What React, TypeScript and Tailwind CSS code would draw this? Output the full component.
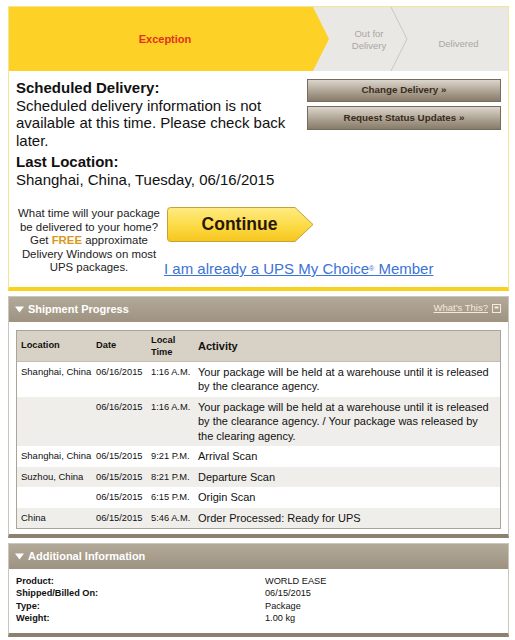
import React from "react";

const rows = [
  { loc: "Shanghai, China", date: "06/16/2015", time: "1:16 A.M.", act: "Your package will be held at a warehouse until it is released by the clearance agency." },
  { loc: "", date: "06/16/2015", time: "1:16 A.M.", act: "Your package will be held at a warehouse until it is released by the clearance agency. / Your package was released by the clearing agency." },
  { loc: "Shanghai, China", date: "06/15/2015", time: "9:21 P.M.", act: "Arrival Scan" },
  { loc: "Suzhou, China", date: "06/15/2015", time: "8:21 P.M.", act: "Departure Scan" },
  { loc: "", date: "06/15/2015", time: "6:15 P.M.", act: "Origin Scan" },
  { loc: "China", date: "06/15/2015", time: "5:46 A.M.", act: "Order Processed: Ready for UPS" },
];

function Tri() {
  return (
    <svg width="9" height="7" viewBox="0 0 9 7" className="shrink-0">
      <polygon points="0,0.5 9,0.5 4.5,6.5" fill="#ffffff" />
    </svg>
  );
}

export default function App() {
  return (
    <div className="w-[515px] h-[640px] bg-white pt-[6px] pl-[8px] pr-[6px] text-[#111] [font-family:'Liberation_Sans',Arial,sans-serif]">
      {/* Top box */}
      <div className="border border-[#f6e39a] border-b-[4px] border-b-[#f9d11f]">
        {/* progress bar */}
        <div className="relative h-[64px] bg-[#e9e8e4] flex">
          <svg className="absolute inset-0" width="499" height="64" viewBox="0 0 499 64">
            <polygon points="0,0 304,0 320,32 304,64 0,64" fill="#fdd125" />
            <polyline points="382,0 398,32 382,64" fill="none" stroke="#c9c6bf" strokeWidth="1" />
          </svg>
          <div className="relative w-[312px] flex items-center justify-center text-[11px] font-bold text-[#e2311d]">
            Exception
          </div>
          <div className="relative w-[80px] ml-[8px] flex items-center justify-center text-center text-[9.5px] leading-[11.5px] text-[#aaa7a1] pt-[1px]">
            Out for<br />Delivery
          </div>
          <div className="relative flex-1 flex items-center justify-center text-[9.5px] text-[#aaa7a1] pt-[10px]">
            Delivered
          </div>
        </div>

        <div className="pl-[7px] pr-[7px] pt-[8px] pb-[10px]">
          <div className="flex gap-[7px]">
            <div className="flex-1 text-[15px] leading-[17.5px]">
              <div className="font-bold">Scheduled Delivery:</div>
              <div>Scheduled delivery information is not available at this time. Please check back later.</div>
              <div className="font-bold mt-[4px]">Last Location:</div>
              <div>Shanghai, China, Tuesday, 06/16/2015</div>
            </div>
            <div className="w-[194px] flex flex-col gap-[4px]">
              <div className="h-[23px] flex items-center justify-center border border-[#756a5b] bg-gradient-to-b from-[#dcd6cd] via-[#b1a797] to-[#877b6a] text-[9.8px] font-bold text-[#3a2b1c]">
                Change Delivery »
              </div>
              <div className="h-[24px] flex items-center justify-center border border-[#756a5b] bg-gradient-to-b from-[#dcd6cd] via-[#b1a797] to-[#877b6a] text-[9.8px] font-bold text-[#3a2b1c]">
                Request Status Updates »
              </div>
            </div>
          </div>

          <div className="flex mt-[19px]">
            <div className="w-[146px] text-center text-[11.4px] leading-[13.5px] text-[#222]">
              What time will your package be delivered to your home? Get <b className="text-[#d8981c]">FREE</b> approximate Delivery Windows on most UPS packages.
            </div>
            <div className="flex flex-col ml-[2px]">
              <div className="relative w-[147px] h-[35px] ml-[3px]">
                <svg className="absolute inset-0" width="147" height="35" viewBox="0 0 147 35">
                  <defs>
                    <linearGradient id="cg" x1="0" y1="0" x2="0" y2="1">
                      <stop offset="0" stopColor="#feeb83" />
                      <stop offset="0.5" stopColor="#fcdc4a" />
                      <stop offset="1" stopColor="#f6c51c" />
                    </linearGradient>
                  </defs>
                  <path d="M3.5 0.5 H128 L146 17.5 L128 34.5 H3.5 Q0.5 34.5 0.5 31.5 V3.5 Q0.5 0.5 3.5 0.5 Z" fill="url(#cg)" stroke="#c6a139" strokeWidth="1" />
                </svg>
                <div className="relative h-full flex items-center justify-center pr-[2px] text-[17.5px] font-bold text-[#2a1606]">
                  Continue
                </div>
              </div>
              <a className="mt-[18px] text-[15px] leading-[17px] text-[#3b73d6] underline whitespace-nowrap">
                I am already a UPS My Choice<sup className="text-[7px]">®</sup> Member
              </a>
            </div>
          </div>
        </div>
      </div>

      {/* Shipment Progress */}
      <div className="mt-[5px] border border-[#cbc6bc] border-b-[4px] border-b-[#8c8170]">
        <div className="h-[25px] flex items-center justify-between pl-[6px] pr-[7px] bg-gradient-to-b from-[#b3a999] to-[#9e9381]">
          <div className="flex items-center gap-[4px] text-white font-bold text-[11px]">
            <Tri />
            <span>Shipment Progress</span>
          </div>
          <div className="flex items-center gap-[4px] text-[9.5px] text-[#f3ebdd] -mt-[3px]">
            <span className="underline">What's This?</span>
            <svg width="9" height="9" viewBox="0 0 9 9">
              <rect x="0.5" y="0.5" width="8" height="8" fill="none" stroke="#f3ebdd" />
              <rect x="2.5" y="2.5" width="4" height="2" fill="#f3ebdd" />
            </svg>
          </div>
        </div>
        <div className="px-[7px] pt-[8px] pb-[5px] bg-white">
          <div className="border border-[#aaa59b] shadow-[inset_0_1px_2px_rgba(0,0,0,0.15)]">
            <table className="w-full border-collapse table-fixed">
              <colgroup>
                <col className="w-[75px]" />
                <col className="w-[55px]" />
                <col className="w-[47px]" />
                <col />
              </colgroup>
              <thead>
                <tr className="h-[30px] bg-[#d8d1c5] border-b border-[#c4bdb1] text-left">
                  <th className="pl-[4px] text-[9.3px] font-bold align-middle">Location</th>
                  <th className="pl-[4px] text-[9.3px] font-bold align-middle">Date</th>
                  <th className="pl-[4px] text-[9.3px] font-bold leading-[12px] align-middle">Local<br />Time</th>
                  <th className="pl-[4px] text-[11px] font-bold align-middle">Activity</th>
                </tr>
              </thead>
              <tbody>
                {rows.map((r, i) => (
                  <tr key={i} className={i % 2 === 0 ? "bg-white" : "bg-[#efeeea]"}>
                    <td className="pl-[4px] py-[3px] align-top text-[9.5px] leading-[14.5px] whitespace-nowrap">{r.loc}</td>
                    <td className="pl-[4px] py-[3px] align-top text-[9.3px] leading-[14.5px] whitespace-nowrap">{r.date}</td>
                    <td className="pl-[4px] py-[3px] align-top text-[9.3px] leading-[14.5px] whitespace-nowrap">{r.time}</td>
                    <td className="pl-[4px] pr-[4px] py-[3px] align-top text-[11px] leading-[14.5px]">{r.act}</td>
                  </tr>
                ))}
              </tbody>
            </table>
          </div>
        </div>
      </div>

      {/* Additional Information */}
      <div className="mt-[5px] border border-[#cbc6bc] border-b-[4px] border-b-[#8c8170]">
        <div className="h-[25px] flex items-center pl-[6px] bg-gradient-to-b from-[#b3a999] to-[#9e9381]">
          <div className="flex items-center gap-[4px] text-white font-bold text-[11px]">
            <Tri />
            <span>Additional Information</span>
          </div>
        </div>
        <div className="bg-white pl-[7px] pt-[6px] pb-[8px] grid grid-cols-[249px_1fr] text-[9.2px] leading-[12.4px]">
          <div className="font-bold">Product:</div>
          <div>WORLD EASE</div>
          <div className="font-bold">Shipped/Billed On:</div>
          <div>06/15/2015</div>
          <div className="font-bold">Type:</div>
          <div>Package</div>
          <div className="font-bold">Weight:</div>
          <div>1.00 kg</div>
        </div>
      </div>
    </div>
  );
}
